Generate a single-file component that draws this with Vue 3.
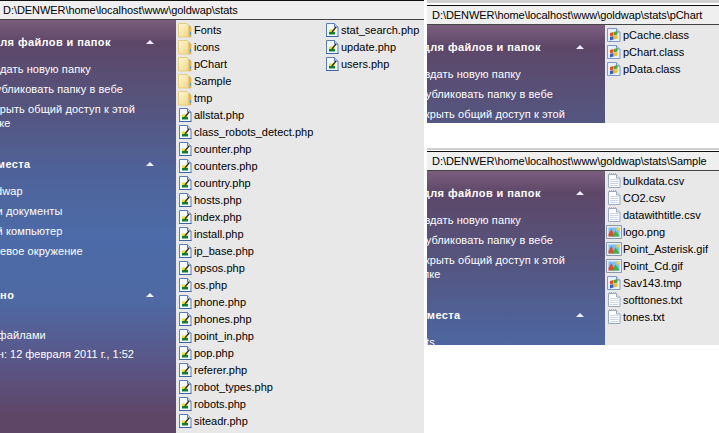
<script setup>
const win1 = [
  ['folder', 'Fonts'], ['folder', 'icons'], ['folder', 'pChart'], ['folder', 'Sample'], ['folder', 'tmp'],
  ['php', 'allstat.php'], ['php', 'class_robots_detect.php'], ['php', 'counter.php'], ['php', 'counters.php'],
  ['php', 'country.php'], ['php', 'hosts.php'], ['php', 'index.php'], ['php', 'install.php'], ['php', 'ip_base.php'],
  ['php', 'opsos.php'], ['php', 'os.php'], ['php', 'phone.php'], ['php', 'phones.php'], ['php', 'point_in.php'],
  ['php', 'pop.php'], ['php', 'referer.php'], ['php', 'robot_types.php'], ['php', 'robots.php'], ['php', 'siteadr.php'],
  ['php', 'stat_search.php'], ['php', 'update.php'], ['php', 'users.php']
]
const win2 = [['cls', 'pCache.class'], ['cls', 'pChart.class'], ['cls', 'pData.class']]
const win3 = [
  ['txt', 'bulkdata.csv'], ['txt', 'CO2.csv'], ['txt', 'datawithtitle.csv'], ['img', 'logo.png'],
  ['img', 'Point_Asterisk.gif'], ['img', 'Point_Cd.gif'], ['cls', 'Sav143.tmp'], ['txt', 'softtones.txt'], ['txt', 'tones.txt']
]
const tasks = ['Создать новую папку', 'Опубликовать папку в вебе', 'Открыть общий доступ к этой папке']
</script>

<template>
  <div class="desk">
    <svg class="sprite" width="0" height="0" aria-hidden="true">
      <defs>
        <linearGradient id="fg" x1="0" y1="0" x2="1" y2="1">
          <stop offset="0" stop-color="#fff9dc" />
          <stop offset="1" stop-color="#f0d47c" />
        </linearGradient>
        <symbol id="folder" viewBox="0 0 16 16">
          <path d="M1.500 15V1.500h8.500l2 2V15z" fill="url(#fg)" stroke="#e6cc80" />
          <path d="M12 3.500l2 1.500v10h-2z" fill="#e8bc58" stroke="#d0a850" stroke-width=".6" />
          <path d="M13 10h1v3h-1z" fill="#5a9ccc" />
        </symbol>
        <symbol id="php" viewBox="0 0 16 16">
          <path d="M2.500 1.500h8l3.500 3.500v9.500h-11.500z" fill="#f4f8ff" stroke="#5c7cb4" />
          <path d="M10.500 1.500v3.500h3.500" fill="#c8d8f0" stroke="#5c7cb4" />
          <path d="M2 14h12.500v1h-12.500z" fill="#3c64a8" />
          <path d="M5 7.500h5.500v2.500h-5.500z" fill="#e0e030" />
          <path d="M5 10h6v2.500h-6z" fill="#108030" />
          <path d="M7.500 9.500l4-5 1 1-4 5z" fill="#382810" />
        </symbol>
        <symbol id="cls" viewBox="0 0 16 16">
          <path d="M1.500 1.500h9l3.500 3.500v9.500h-12.500z" fill="#e8f0fc" stroke="#7c98c8" />
          <path d="M10.500 1.500v3.500h3.500" fill="#c8d8f0" stroke="#7c98c8" />
          <path d="M4 6l3.500-1v3.500l-3.500 1z" fill="#e85020" />
          <path d="M8 5l3.500-1v3.500l-3.500 1z" fill="#50a830" />
          <path d="M4 10l3.500-1v3.500l-3.500 1z" fill="#3060d0" />
          <path d="M8 9l3.500-1v3.500l-3.500 1z" fill="#f0c020" />
        </symbol>
        <symbol id="txt" viewBox="0 0 16 16">
          <path d="M2.500 1.500h8l3.500 3.500v9.500h-11.500z" fill="#fff" stroke="#98a8c0" />
          <path d="M10.500 1.500v3.500h3.500" fill="#eef2f8" stroke="#98a8c0" />
          <path d="M4 6.500h8.500M4 8.500h8.500M4 10.500h8.500M4 12.500h8.500" stroke="#ccd8e8" fill="none" />
          <path d="M3 .5h7" stroke="#a8b4c8" stroke-dasharray="1 1" fill="none" />
        </symbol>
        <symbol id="img" viewBox="0 0 16 16">
          <path d="M.5 1.500h15v13h-15z" fill="#e8eef8" stroke="#8c98a8" />
          <path d="M2.500 3.500h11v9h-11z" fill="#7cc0f0" />
          <path d="M2.500 12.500v-2.500l3-5 3 7.500z" fill="#e04830" />
          <path d="M6 12.500l3.500-6 4 6z" fill="#40b040" />
          <path d="M10.500 3.500h3v3h-3z" fill="#f0d040" />
        </symbol>
      </defs>
    </svg>

    <section class="win win-main">
      <div class="path">D:\DENWER\home\localhost\www\goldwap\stats</div>
      <div class="panel">
        <aside class="side">
          <div class="hd"><span>Задачи для файлов и папок</span><i class="chev"></i></div>
          <ul class="links"><li v-for="t in tasks" :key="t">{{ t }}</li></ul>
          <div class="hd hd-next"><span>Другие места</span><i class="chev"></i></div>
          <ul class="links">
            <li>goldwap</li><li>Мои документы</li><li>Мой компьютер</li><li>Сетевое окружение</li>
          </ul>
          <div class="hd hd-third"><span>Подробно</span><i class="chev"></i></div>
          <ul class="links details">
            <li class="kind">Папка с файлами</li>
            <li class="changed">Изменен: 12 февраля 2011 г., 1:52</li>
          </ul>
        </aside>
        <div class="files files-main">
          <div v-for="f in win1" :key="f[1]" class="file">
            <svg class="ico" width="16" height="16"><use :href="'#' + f[0]" /></svg><span>{{ f[1] }}</span>
          </div>
        </div>
      </div>
    </section>

    <div class="right">
      <div class="topline first"></div>
      <section class="win win-b">
        <div class="path">D:\DENWER\home\localhost\www\goldwap\stats\pChart</div>
        <div class="panel">
          <aside class="side">
            <div class="hd"><span>Задачи для файлов и папок</span><i class="chev"></i></div>
            <ul class="links"><li v-for="t in tasks" :key="t">{{ t }}</li></ul>
          </aside>
          <div class="files">
            <div v-for="f in win2" :key="f[1]" class="file">
              <svg class="ico" width="16" height="16"><use :href="'#' + f[0]" /></svg><span>{{ f[1] }}</span>
            </div>
          </div>
        </div>
      </section>
      <div class="topline second"></div>
      <section class="win win-c">
        <div class="path">D:\DENWER\home\localhost\www\goldwap\stats\Sample</div>
        <div class="panel">
          <aside class="side">
            <div class="hd"><span>Задачи для файлов и папок</span><i class="chev"></i></div>
            <ul class="links"><li v-for="t in tasks" :key="t">{{ t }}</li></ul>
            <div class="hd hd-next"><span>Другие места</span><i class="chev"></i></div>
            <ul class="links"><li>stats</li></ul>
          </aside>
          <div class="files">
            <div v-for="f in win3" :key="f[1]" class="file">
              <svg class="ico" width="16" height="16"><use :href="'#' + f[0]" /></svg><span>{{ f[1] }}</span>
            </div>
          </div>
        </div>
      </section>
    </div>
  </div>
</template>

<style scoped>
.desk {
  display: flex;
  width: 719px;
  height: 433px;
  overflow: hidden;
  background: #fff;
  font-family: "Liberation Sans", Arial, sans-serif;
  font-size: 11px;
  color: #000;
}
.sprite { position: absolute; }
.win { display: flex; flex-direction: column; overflow: hidden; border-top: 1px solid #111; }
.win-main { width: 424px; height: 433px; }
.right { width: 292px; margin-left: 3px; display: flex; flex-direction: column; }
.topline { flex: none; background: #d0d0d0; }
.topline.first { height: 3px; margin-bottom: 2px; }
.topline.second { height: 2px; margin-top: 25px; margin-bottom: 1px; }
.win-b { height: 117px; flex: none; }
.win-c { height: 193px; flex: none; }
.path {
  height: 18px;
  line-height: 18px;
  padding-left: 3px;
  background: #efefef;
  border-bottom: 1px solid #444;
  flex: none;
  white-space: nowrap;
  letter-spacing: -.06px;
}
.right .path { padding-left: 5px; }
.panel { flex: 1; display: flex; min-height: 0; background: #e8e8e8; }
.side {
  width: 176px;
  flex: none;
  overflow: hidden;
  color: #fff;
  background: linear-gradient(180deg, #7b5e7e 0, #5d4768 22px, #55557f 90px, #4f6298 150px, #4c6ba8 215px, #4e69a4 280px, #5a5586 345px, #5e4667 395px);
}
.right .side { width: 178px; }
.hd {
  height: 16px;
  line-height: 16px;
  margin-top: 14px;
  display: flex;
  font-weight: 700;
  white-space: nowrap;
  position: relative;
  letter-spacing: .4px;
}
.hd span { margin-left: -52px; }
.right .hd span { margin-left: -49px; }
.hd-next { margin-top: 26px; }
.hd-next span { margin-left: -47px; }
.right .hd-next span { margin-left: -44px; }
.hd-third { margin-top: 29px; }
.hd-third span { margin-left: -44px; }
.chev {
  position: absolute;
  left: 146px;
  top: 6px;
  border: 4px solid transparent;
  border-top: 0;
  border-bottom: 4px solid #eef;
}
.right .chev { left: 149px; }
.links { list-style: none; margin: 12px 0 0; padding: 0; letter-spacing: .1px; }
.links li { width: 175px; margin-left: -19px; line-height: 14px; margin-bottom: 6px; }
.right .links li { margin-left: -16px; }
.details { margin-top: 25px; }
.links .kind { margin-left: -46px; margin-bottom: 5px; white-space: nowrap; }
.links .changed { margin-left: -41px; white-space: nowrap; letter-spacing: 0; }
.files { padding: 1px 0 0 1px; flex: 1; min-width: 0; }
.files-main {
  display: grid;
  grid-auto-flow: column;
  grid-template-rows: repeat(24, 17px);
  grid-template-columns: 147px 100px;
}
.file { height: 17px; display: flex; align-items: center; white-space: nowrap; gap: 1px; }
.ico { flex: none; }
</style>

<style>
html, body { background: #fff; }
</style>
